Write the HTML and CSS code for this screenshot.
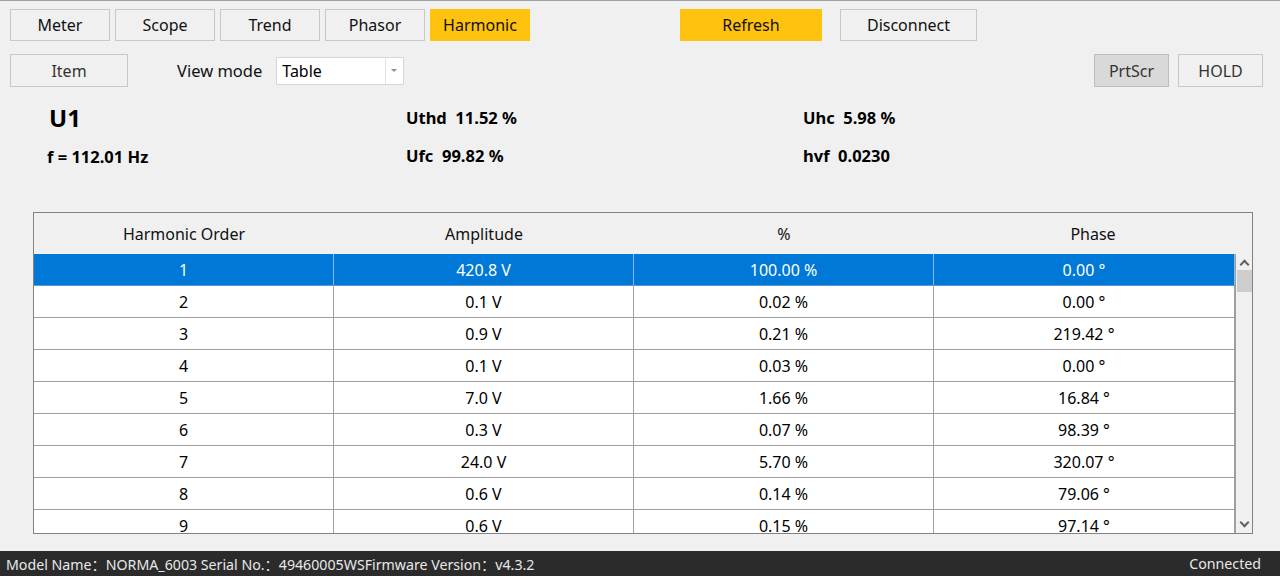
FILE: index.html
```
<!DOCTYPE html>
<html lang="en">
<head>
    <meta charset="UTF-8">
    <meta name="viewport" content="width=device-width, initial-scale=1.0">
    <title>Harmonic</title>
    <link rel="stylesheet" href="styles.css">
</head>
<body>
    <div class="app">
        <!-- Main navigation -->
        <div class="toolbar">
            <button class="btn tab">Meter</button>
            <button class="btn tab">Scope</button>
            <button class="btn tab">Trend</button>
            <button class="btn tab">Phasor</button>
            <button class="btn tab active">Harmonic</button>
            <button class="btn refresh active">Refresh</button>
            <button class="btn disconnect">Disconnect</button>
        </div>

        <div class="subbar">
            <button class="btn item">Item</button>
            <span class="label">View mode</span>
            <div class="combo">
                <span class="combo-text">Table</span>
                <span class="combo-arrow"></span>
            </div>
            <div class="subbar-right">
                <button class="btn prtscr">PrtScr</button>
                <button class="btn hold">HOLD</button>
            </div>
        </div>

        <!-- Summary values -->
        <div class="readings">
            <div class="channel">U1</div>
            <div class="value">Uthd&nbsp; 11.52 %</div>
            <div class="value">Uhc&nbsp; 5.98 %</div>
            <div class="value freq">f = 112.01 Hz</div>
            <div class="value">Ufc&nbsp; 99.82 %</div>
            <div class="value">hvf&nbsp; 0.0230</div>
        </div>

        <div class="grid-frame">
            <div class="grid-head">
                <div>Harmonic Order</div>
                <div>Amplitude</div>
                <div>%</div>
                <div>Phase</div>
            </div>
            <div class="grid-body">
                <div class="rows" id="rows"></div>
                <div class="scrollbar">
                    <span class="arrow up"></span>
                    <span class="thumb"></span>
                    <span class="arrow down"></span>
                </div>
            </div>
        </div>

        <div class="statusbar">
            <span>Model Name：NORMA_6003 Serial No.：49460005WSFirmware Version：v4.3.2</span>
            <span>Connected</span>
        </div>
    </div>

    <script>
        // Harmonic table data: order, amplitude, percent, phase
        const harmonics = [
            [1, '420.8 V', '100.00 %', '0.00 °'],
            [2, '0.1 V', '0.02 %', '0.00 °'],
            [3, '0.9 V', '0.21 %', '219.42 °'],
            [4, '0.1 V', '0.03 %', '0.00 °'],
            [5, '7.0 V', '1.66 %', '16.84 °'],
            [6, '0.3 V', '0.07 %', '98.39 °'],
            [7, '24.0 V', '5.70 %', '320.07 °'],
            [8, '0.6 V', '0.14 %', '79.06 °'],
            [9, '0.6 V', '0.15 %', '97.14 °']
        ];

        const rows = document.getElementById('rows');
        harmonics.forEach((h, i) => {
            const row = document.createElement('div');
            row.className = 'row' + (i === 0 ? ' selected' : '');
            row.innerHTML = h.map(v => `<div>${v}</div>`).join('');
            rows.appendChild(row);
        });
    </script>
</body>
</html>
```

FILE: styles.css
```
* {
    box-sizing: border-box;
}
body {
    margin: 0;
    background-color: #f0f0f0;
    font-family: "Noto Sans", "Noto Sans CJK SC", sans-serif;
    color: #000;
}
.app {
    height: 576px;
    display: flex;
    flex-direction: column;
    border-top: 1px solid #a0a0a0;
}
.btn {
    font-family: inherit;
    font-size: 16px;
    color: #111;
    background-color: #f0f0f0;
    border: 1px solid #c8c8c8;
    padding: 0;
    cursor: pointer;
}
.btn.active {
    background-color: #ffc20e;
    border-color: #ffc20e;
}
.toolbar {
    display: flex;
    gap: 5px;
    padding: 8px 10px 0;
}
.tab {
    width: 100px;
    height: 32px;
}
.refresh {
    width: 142px;
    height: 32px;
    margin-left: 145px;
}
.disconnect {
    width: 137px;
    height: 32px;
    margin-left: 13px;
}
.subbar {
    display: flex;
    align-items: center;
    padding: 13px 17px 0 10px;
}
.item {
    width: 118px;
    height: 33px;
    color: #333;
}
.label {
    margin-left: 49px;
    font-size: 16.5px;
    color: #111;
}
.combo {
    margin-left: 14px;
    width: 128px;
    height: 28px;
    background-color: #fff;
    border: 1px solid #d6d6d6;
    display: flex;
    align-items: center;
}
.combo-text {
    flex: 1;
    padding-left: 5px;
    font-size: 16px;
}
.combo-arrow {
    width: 18px;
    height: 26px;
    border-left: 1px solid #e2e2e2;
    position: relative;
}
.combo-arrow::after {
    content: "";
    position: absolute;
    left: 5px;
    top: 11px;
    border-left: 3px solid transparent;
    border-right: 3px solid transparent;
    border-top: 3px solid #909090;
}
.subbar-right {
    margin-left: auto;
    display: flex;
    gap: 9px;
}
.prtscr {
    width: 75px;
    height: 33px;
    background-color: #d9d9d9;
    border-color: #bdbdbd;
    color: #333;
}
.hold {
    width: 85px;
    height: 33px;
    color: #333;
}
.readings {
    display: grid;
    grid-template-columns: 359px 397px 1fr;
    grid-template-rows: 38px 38px;
    align-items: center;
    padding: 11px 0 0 47px;
    font-weight: bold;
}
.channel {
    font-size: 24px;
    padding-left: 2px;
}
.value {
    font-size: 16.5px;
}
.freq {
    padding-top: 2px;
}
.grid-frame {
    margin: 38px 27px 0 33px;
    height: 322px;
    border: 1px solid #828282;
    display: flex;
    flex-direction: column;
}
.grid-head {
    display: grid;
    grid-template-columns: 300px 300px 300px 1fr;
    height: 41px;
    align-items: center;
    text-align: center;
    font-size: 16px;
    color: #111;
}
.grid-body {
    display: flex;
    flex: 1;
    overflow: hidden;
}
.rows {
    width: 1201px;
    overflow: hidden;
    background-color: #fff;
}
.row {
    display: grid;
    grid-template-columns: 300px 300px 300px 301px;
    height: 32px;
    border-bottom: 1px solid #a0a0a0;
    font-size: 16px;
}
.row div {
    display: flex;
    align-items: center;
    justify-content: center;
    border-right: 1px solid #a0a0a0;
}
.row.selected {
    background-color: #0078d7;
    color: #fff;
    border-bottom-color: #5f9bd3;
}
.row.selected div {
    border-right-color: #8fb8e0;
}
.scrollbar {
    flex: 1;
    background-color: #f0f0f0;
    border-left: 1px solid #a0a0a0;
    display: flex;
    flex-direction: column;
    align-items: center;
}
.thumb {
    width: 15px;
    height: 22px;
    background-color: #cdcdcd;
    margin-top: 2px;
}
.arrow {
    width: 7px;
    height: 7px;
    border-left: 2px solid #606060;
    border-top: 2px solid #606060;
}
.arrow.up {
    transform: rotate(45deg);
    margin-top: 7px;
}
.arrow.down {
    transform: rotate(225deg);
    margin-top: auto;
    margin-bottom: 7px;
}
.statusbar {
    margin-top: auto;
    height: 25px;
    background-color: #2b2b2b;
    color: #e8e8e8;
    font-size: 14.2px;
    display: flex;
    align-items: center;
    justify-content: space-between;
    padding: 0 19px 0 6px;
}
```
